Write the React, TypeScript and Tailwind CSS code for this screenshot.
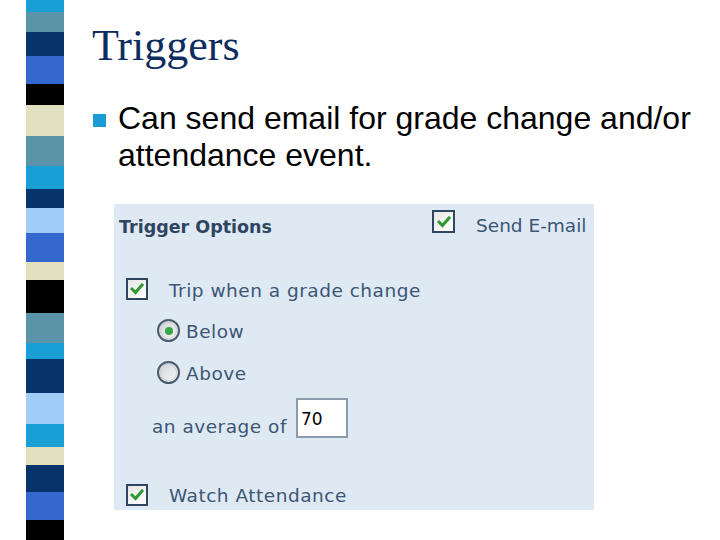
const stripes = [
  'h-[12px] bg-[#1a9fd5]',
  'h-[20px] bg-[#5b94a9]',
  'h-[24px] bg-[#06346a]',
  'h-[28px] bg-[#3468cf]',
  'h-[21px] bg-black',
  'h-[31px] bg-[#e1e1c1]',
  'h-[30px] bg-[#5b94a9]',
  'h-[23px] bg-[#1a9fd5]',
  'h-[19px] bg-[#06346a]',
  'h-[25px] bg-[#9fcdf7]',
  'h-[29px] bg-[#3468cf]',
  'h-[18px] bg-[#e1e1c1]',
  'h-[33px] bg-black',
  'h-[30px] bg-[#5b94a9]',
  'h-[16px] bg-[#1a9fd5]',
  'h-[34px] bg-[#06346a]',
  'h-[31px] bg-[#9fcdf7]',
  'h-[23px] bg-[#1a9fd5]',
  'h-[18px] bg-[#e1e1c1]',
  'h-[27px] bg-[#06346a]',
  'h-[28px] bg-[#3468cf]',
  'h-[20px] bg-black',
];

const Checkbox = ({ size = 'w-[22px] h-[22px]' }: { size?: string }) => (
  <div className={`${size} shrink-0 border-2 border-[#2f4660] bg-gradient-to-br from-[#e6e6e6] to-white flex items-center justify-center`}>
    <svg width="14" height="12" viewBox="0 0 14 12">
      <polyline points="2,6 5.5,9.5 12,2" fill="none" stroke="#2c9a30" strokeWidth="3" strokeLinecap="square" />
    </svg>
  </div>
);

const Radio = ({ checked }: { checked?: boolean }) => (
  <div className="w-[23px] h-[23px] shrink-0 rounded-full border-2 border-[#4a5b6c] bg-gradient-to-br from-[#cfd3d6] to-[#f7f7f7] flex items-center justify-center">
    <div className="w-[17px] h-[17px] rounded-full border border-[#c9ced3] flex items-center justify-center">
      {checked && <div className="w-[8px] h-[8px] rounded-full bg-[#35a84a]" />}
    </div>
  </div>
);

const label = "text-[18.5px] leading-[22px] tracking-[0.5px] text-[#3b5675] font-['DejaVu_Sans',sans-serif] whitespace-nowrap";

export default function App() {
  return (
    <div className="w-[720px] h-[540px] bg-white flex overflow-hidden">
      {/* striped side bar */}
      <div className="ml-[26px] w-[38px] flex flex-col shrink-0">
        {stripes.map((s, i) => (
          <div key={i} className={s} />
        ))}
      </div>

      <div className="flex-1 pl-[28px] flex flex-col">
        <h1 className="pt-[24px] text-[44px] leading-[44px] text-[#0c2d5e] font-['Liberation_Serif',serif]">
          Triggers
        </h1>

        <div className="mt-[32px] flex items-start">
          <div className="ml-[1px] mt-[14px] w-[13px] h-[13px] bg-[#1a9dd4] shrink-0" />
          <p className="ml-[12px] w-[590px] text-[32px] leading-[37px] text-black font-['Liberation_Sans',sans-serif]">
            Can send email for grade change and/or attendance event.
          </p>
        </div>

        {/* Trigger options panel */}
        <div className="mt-[30px] ml-[22px] w-[480px] h-[306px] bg-[#dfe9f4] pt-[6px] flex flex-col">
          <div className="flex items-start h-[23px]">
            <div className="w-[318px] pl-[5px] mt-[5px]">
              <span className="text-[17.5px] leading-[22px] font-bold text-[#2d4560] font-['DejaVu_Sans',sans-serif] whitespace-nowrap">
                Trigger Options
              </span>
            </div>
            <Checkbox size="w-[23px] h-[23px]" />
            <span className={`${label} tracking-[0px] ml-[21px] mt-[5px]`}>Send E-mail</span>
          </div>

          <div className="mt-[45px] pl-[12px] flex items-start h-[22px]">
            <Checkbox />
            <span className={`${label} ml-[21px] mt-[2px]`}>Trip when a grade change</span>
          </div>

          <div className="mt-[19px] pl-[43px] flex items-start h-[23px]">
            <Radio checked />
            <span className={`${label} ml-[6px] mt-[2px]`}>Below</span>
          </div>

          <div className="mt-[19px] pl-[43px] flex items-start h-[23px]">
            <Radio />
            <span className={`${label} ml-[6px] mt-[2px]`}>Above</span>
          </div>

          <div className="mt-[14px] pl-[38px] flex items-start h-[40px]">
            <div className="w-[144px] mt-[17px]">
              <span className={`${label} tracking-[-0.5px]`}>an average of</span>
            </div>
            <div className="w-[52px] h-[40px] bg-white border-2 border-[#8b9bac] pl-[3px] pt-[7px]">
              <span className="text-[17px] leading-[20px] text-black font-['DejaVu_Sans',sans-serif]">70</span>
            </div>
          </div>

          <div className="mt-[46px] pl-[12px] flex items-start h-[22px]">
            <Checkbox />
            <span className={`${label} ml-[21px] mt-[1px]`}>Watch Attendance</span>
          </div>
        </div>
      </div>
    </div>
  );
}
